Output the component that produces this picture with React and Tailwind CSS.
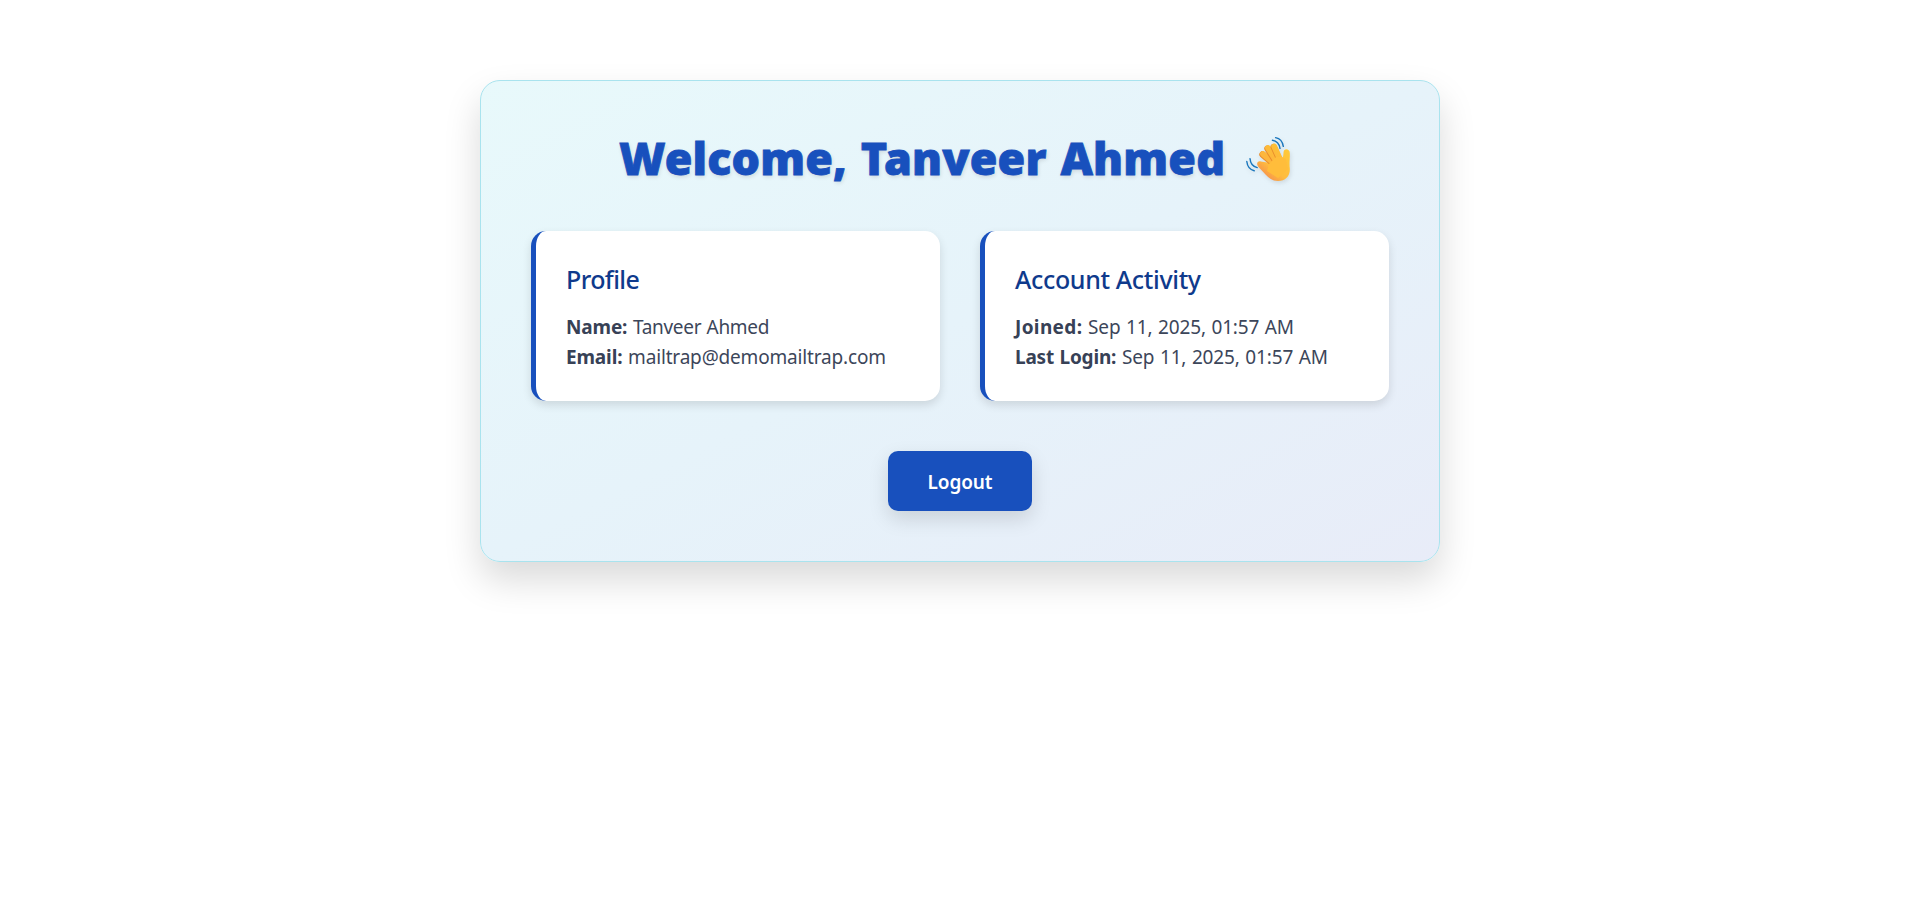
const details = [
  {
    title: "Profile",
    titleClass: "tracking-[-0.6px]",
    rows: [
      { label: "Name:", labelClass: "tracking-[-0.15px]", value: "Tanveer Ahmed", valueClass: "tracking-[-0.32px]" },
      { label: "Email:", labelClass: "tracking-[-0.15px]", value: "mailtrap@demomailtrap.com", valueClass: "tracking-[-0.17px]" },
    ],
  },
  {
    title: "Account Activity",
    titleClass: "tracking-[-0.35px]",
    rows: [
      { label: "Joined:", labelClass: "tracking-[0.35px]", value: "Sep 11, 2025, 01:57 AM", valueClass: "tracking-[-0.15px]" },
      { label: "Last Login:", labelClass: "tracking-[-0.2px]", value: "Sep 11, 2025, 01:57 AM", valueClass: "tracking-[-0.15px]" },
    ],
  },
];

function WavingHand() {
  return (
    <svg viewBox="16 16 46 46" className="h-[46px] w-[46px] shrink-0 drop-shadow-[1px_2px_2px_rgba(0,0,0,0.1)]" fill="none" strokeLinecap="round" strokeLinejoin="round">
      <defs>
        <linearGradient id="skin" gradientUnits="userSpaceOnUse" x1="56" y1="30" x2="34" y2="56">
          <stop offset="0" stopColor="#ffc83a" />
          <stop offset="0.65" stopColor="#ffbc3e" />
          <stop offset="1" stopColor="#f6934c" />
        </linearGradient>
        <linearGradient id="finger" gradientUnits="userSpaceOnUse" x1="46" y1="25" x2="32" y2="45">
          <stop offset="0" stopColor="#fdc036" />
          <stop offset="1" stopColor="#fdb040" />
        </linearGradient>
      </defs>
      <path d="M45.6 17.6Q52.2 18.8 53.3 26.4M42.4 20.3Q48.8 21.2 50 28.4M16.8 41.5Q17.6 49 24.2 50.8M20 38.6Q20.6 46 27.2 47.6" stroke="#1976bd" strokeWidth="1.4" />
      <path d="M53 45C52 39 53.5 36 53.5 32.5C53.6 28 59.6 28.5 59.8 33C60 39 59 43 59.8 49C60 56 55.5 61 48 61C42 61 39 58 35.5 54.5L28.5 47C25.5 43.5 28 40 31 41.5L53 45Z" fill="url(#skin)" />
      <path d="M45 45L32.5 34.5" stroke="#e98e2c" strokeWidth="6.4" />
      <path d="M45.5 44.5L33 34" stroke="url(#finger)" strokeWidth="5.8" />
      <path d="M46 42L37.5 28.5" stroke="#e98e2c" strokeWidth="6.4" />
      <path d="M46.5 41.5L38 28" stroke="url(#finger)" strokeWidth="5.8" />
      <path d="M50 41L43.7 27" stroke="#e98e2c" strokeWidth="6.4" />
      <path d="M50.5 40.5L44.2 26.5" stroke="url(#finger)" strokeWidth="5.8" />
      <path d="M39 44L46 37L51 36.5L56 39L58 49L48 58L37 51Z" fill="#ffbd3b" />
    </svg>
  );
}

export default function App() {
  return (
    <div className="min-h-screen bg-white px-4 pt-20 font-['Noto_Sans','Open_Sans',sans-serif]">
      <main className="mx-auto flex h-[482px] w-[960px] flex-col rounded-[20px] border border-[#a9e3ee] bg-linear-to-br from-[#e8f9fb] via-[#e6f3fa] to-[#e8ecf8] p-[50px] shadow-[0_18px_36px_rgba(0,0,0,0.15)]">
        <h1 className="flex h-[100px] items-start justify-center pr-[9px] text-[44.8px] leading-[54px] font-black tracking-[0.17px] whitespace-nowrap text-[#1850bd] [-webkit-text-stroke:0.8px_#1850bd] [word-spacing:2px] text-shadow-[1px_2px_4px_rgba(0,0,0,0.12)]">
          <span>Welcome, Tanveer Ahmed</span>
          <span className="ml-[21px] pt-[5px]"><WavingHand /></span>
        </h1>
        <div className="grid grid-cols-2 gap-10">
          {details.map((card) => (
            <section key={card.title} className="h-[170px] rounded-[15px] border-l-[5px] border-[#1850bd] bg-white px-[30px] pt-[31px] shadow-[0_4px_10px_rgba(0,0,0,0.12)]">
              <h2 className={"h-[50px] text-[25px] leading-[34px] font-medium text-[#0f3a8c] " + card.titleClass}>{card.title}</h2>
              {card.rows.map((row) => (
                <p key={row.label} className="text-[19px] leading-[30px] whitespace-nowrap text-[#3c465a] [word-spacing:0.8px]">
                  <strong className={"font-bold text-[#374156] " + row.labelClass}>{row.label}</strong>{" "}
                  <span className={row.valueClass}>{row.value}</span>
                </p>
              ))}
            </section>
          ))}
        </div>
        <button className="mx-auto mt-[50px] h-[60px] w-[144px] rounded-[10px] bg-[#1850bd] pt-[2px] text-[19px] font-semibold tracking-[-0.1px] text-white shadow-[0_8px_20px_rgba(0,0,0,0.13)]">Logout</button>
      </main>
    </div>
  );
}
